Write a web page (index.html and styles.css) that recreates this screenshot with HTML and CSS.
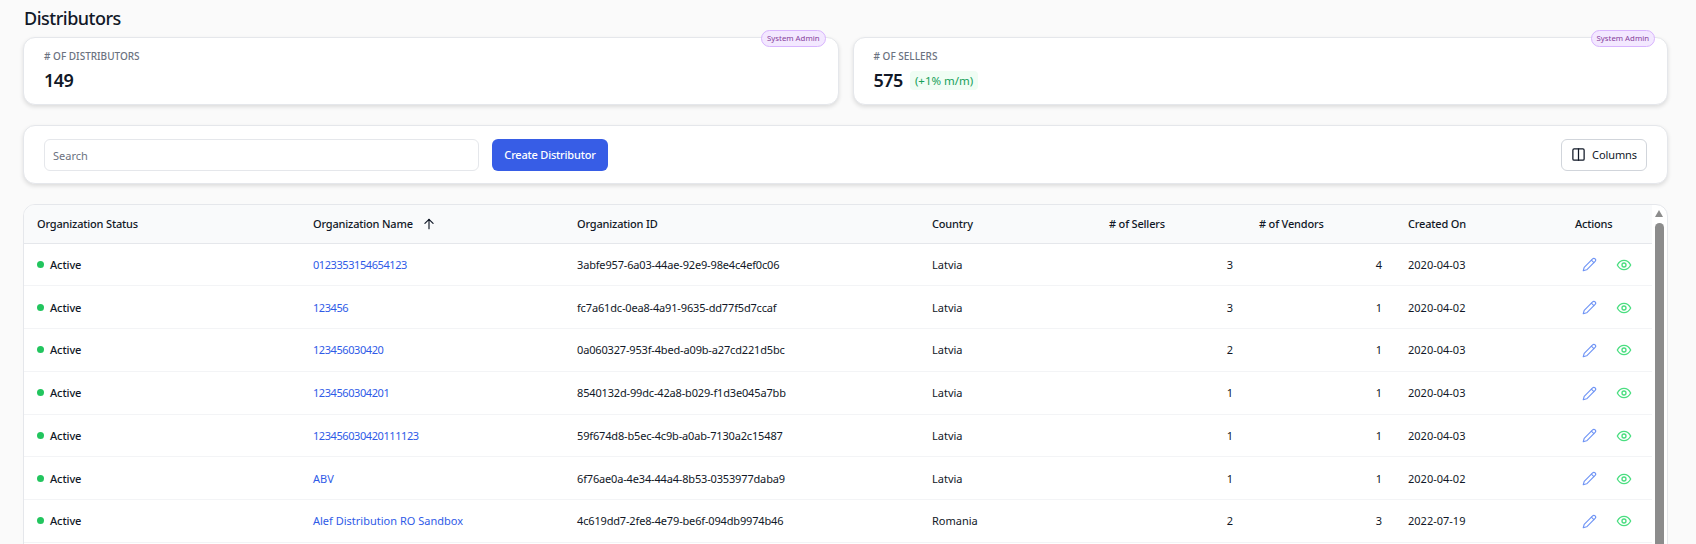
FILE: index.html
```html
<!DOCTYPE html>
<html lang="en">
<head>
    <meta charset="UTF-8">
    <title>Distributors</title>
    <link rel="stylesheet" href="styles.css">
</head>
<body>

<div class="page">
    <h1>Distributors</h1>

    <div class="stats">
        <div class="card stat">
            <span class="role-badge">System Admin</span>
            <div class="stat-label"># OF DISTRIBUTORS</div>
            <div class="stat-value">149</div>
        </div>
        <div class="card stat">
            <span class="role-badge">System Admin</span>
            <div class="stat-label"># OF SELLERS</div>
            <div class="stat-value">575 <span class="trend">(+1% m/m)</span></div>
        </div>
    </div>

    <div class="card toolbar">
        <input type="text" class="search" placeholder="Search">
        <button type="button" class="create">Create Distributor</button>
        <button type="button" class="columns">
            <svg width="15" height="15" viewBox="0 0 24 24" fill="none" stroke="currentColor" stroke-width="2" stroke-linecap="round" stroke-linejoin="round"><rect x="3" y="3" width="18" height="18" rx="2"/><path d="M12 3v18"/></svg>
            Columns
        </button>
    </div>

    <div class="table-card">
        <div class="table-scroll">
            <table>
                <colgroup>
                    <col class="col-status">
                    <col class="col-name">
                    <col class="col-id">
                    <col class="col-country">
                    <col class="col-sellers">
                    <col class="col-vendors">
                    <col class="col-created">
                    <col class="col-actions">
                </colgroup>
                <thead>
                    <tr>
                        <th>Organization Status</th>
                        <th>Organization Name
                            <svg class="sort" width="14" height="14" viewBox="0 0 24 24" fill="none" stroke="currentColor" stroke-width="2" stroke-linecap="round" stroke-linejoin="round"><path d="M12 20V4"/><path d="M5 11l7-7 7 7"/></svg>
                        </th>
                        <th>Organization ID</th>
                        <th>Country</th>
                        <th># of Sellers</th>
                        <th># of Vendors</th>
                        <th>Created On</th>
                        <th>Actions</th>
                    </tr>
                </thead>
                <tbody id="rows"></tbody>
            </table>
        </div>
        <div class="scrollbar">
            <div class="scroll-arrow"></div>
            <div class="scroll-thumb"></div>
        </div>
    </div>
</div>

<script>
    const distributors = [
        ['0123353154654123', '3abfe957-6a03-44ae-92e9-98e4c4ef0c06', 'Latvia', 3, 4, '2020-04-03'],
        ['123456', 'fc7a61dc-0ea8-4a91-9635-dd77f5d7ccaf', 'Latvia', 3, 1, '2020-04-02'],
        ['123456030420', '0a060327-953f-4bed-a09b-a27cd221d5bc', 'Latvia', 2, 1, '2020-04-03'],
        ['1234560304201', '8540132d-99dc-42a8-b029-f1d3e045a7bb', 'Latvia', 1, 1, '2020-04-03'],
        ['123456030420111123', '59f674d8-b5ec-4c9b-a0ab-7130a2c15487', 'Latvia', 1, 1, '2020-04-03'],
        ['ABV', '6f76ae0a-4e34-44a4-8b53-0353977daba9', 'Latvia', 1, 1, '2020-04-02'],
        ['Alef Distribution RO Sandbox', '4c619dd7-2fe8-4e79-be6f-094db9974b46', 'Romania', 2, 3, '2022-07-19']
    ];

    const pencil = '<svg class="edit" width="15" height="15" viewBox="0 0 24 24" fill="none" stroke="currentColor" stroke-width="1.8" stroke-linecap="round" stroke-linejoin="round"><path d="M17 3a2.8 2.8 0 0 1 4 4L7.5 20.5 2 22l1.5-5.5z"/><path d="M15 5l4 4"/></svg>';
    const eye = '<svg class="view" width="16" height="16" viewBox="0 0 24 24" fill="none" stroke="currentColor" stroke-width="2" stroke-linecap="round" stroke-linejoin="round"><path d="M2 12s3.6-7 10-7 10 7 10 7-3.6 7-10 7-10-7-10-7z"/><circle cx="12" cy="12" r="3"/></svg>';

    document.getElementById('rows').innerHTML = distributors.map(d => `
        <tr>
            <td><span class="status"><i class="dot"></i>Active</span></td>
            <td><a href="#" class="${/^\d+$/.test(d[0]) ? 'digits' : ''}">${d[0]}</a></td>
            <td class="uuid">${d[1]}</td>
            <td>${d[2]}</td>
            <td class="num">${d[3]}</td>
            <td class="num">${d[4]}</td>
            <td>${d[5]}</td>
            <td class="actions">${pencil}${eye}</td>
        </tr>
    `).join('');
</script>

</body>
</html>
```

FILE: styles.css
```css
* {
    box-sizing: border-box;
}
html, body {
    height: 544px;
    overflow: hidden;
}
body {
    font-family: 'Noto Sans', 'Open Sans', sans-serif;
    margin: 0;
    background-color: #fafafa;
    color: #111827;
}
.page {
    padding: 5px 28px 0 23px;
}
h1 {
    font-size: 18px;
    line-height: 26px;
    font-weight: 500;
    letter-spacing: -0.5px;
    margin: 0 0 6px 1px;
}
.card {
    background: white;
    border: 1px solid #e5e7eb;
    border-radius: 12px;
    box-shadow: 0 2px 4px rgba(0, 0, 0, 0.12);
}
.stats {
    display: flex;
    gap: 14px;
    margin-bottom: 20px;
}
.stat {
    position: relative;
    flex: 1;
    height: 68px;
    padding: 10px 20px;
}
.role-badge {
    position: absolute;
    top: -8px;
    right: 12px;
    height: 17px;
    padding: 0 5px;
    font-size: 7.8px;
    line-height: 15px;
    color: #86409c;
    background: #f3e8ff;
    border: 1px solid #d8b4fe;
    border-radius: 9px;
}
.stat-label {
    font-size: 10px;
    line-height: 16px;
    font-weight: 500;
    color: #6b7280;
}
.stat-value {
    display: flex;
    align-items: center;
    gap: 7px;
    margin-top: 4px;
    font-size: 18px;
    line-height: 24px;
    font-weight: 600;
    letter-spacing: -0.5px;
}
.trend {
    padding: 1px 5px;
    font-size: 11.5px;
    line-height: 17px;
    font-weight: 400;
    letter-spacing: 0;
    color: #16a05a;
    background: #f0fdf4;
    border-radius: 4px;
}
.toolbar {
    display: flex;
    align-items: center;
    height: 59px;
    padding: 0 20px;
    gap: 13px;
    margin-bottom: 20px;
}
.search {
    width: 435px;
    height: 32px;
    padding: 1px 8px 0;
    font-family: inherit;
    font-size: 11px;
    color: #111827;
    background: white;
    border: 1px solid #e5e7eb;
    border-radius: 6px;
}
.search::placeholder {
    color: #6b7280;
}
button {
    font-family: inherit;
    cursor: pointer;
}
.create {
    width: 116px;
    height: 32px;
    padding: 0;
    font-size: 11px;
    font-weight: 500;
    letter-spacing: -0.2px;
    color: white;
    background-color: #375de6;
    border: none;
    border-radius: 6px;
}
.columns {
    display: flex;
    align-items: center;
    gap: 6px;
    height: 32px;
    margin-left: auto;
    padding: 0 9px;
    font-size: 11px;
    letter-spacing: -0.1px;
    color: #111827;
    background: white;
    border: 1px solid #d1d5db;
    border-radius: 6px;
}
.table-card {
    display: flex;
    height: 400px;
    background: white;
    border: 1px solid #e5e7eb;
    border-radius: 12px;
    overflow: hidden;
}
.table-scroll {
    width: 1628px;
}
table {
    width: 100%;
    table-layout: fixed;
    border-collapse: collapse;
    font-size: 11px;
}
.col-status { width: 276px; }
.col-name { width: 264px; }
.col-id { width: 355px; }
.col-country { width: 177px; }
.col-sellers { width: 150px; }
.col-vendors { width: 149px; }
.col-created { width: 167px; }
.col-actions { width: 90px; }
thead tr {
    height: 38px;
    background-color: #f9fafb;
    border-bottom: 1px solid #e5e7eb;
}
th {
    padding: 0 13px;
    text-align: left;
    font-weight: 500;
    letter-spacing: -0.18px;
}
.sort {
    margin-left: 6px;
    vertical-align: -3px;
}
tbody tr {
    height: 42.75px;
    border-bottom: 1px solid #f3f4f6;
}
td {
    padding: 0 13px;
    white-space: nowrap;
}
td a {
    color: #2f5be7;
    text-decoration: none;
}
.digits {
    letter-spacing: -0.42px;
}
.uuid {
    letter-spacing: -0.16px;
}
.num {
    text-align: right;
}
.status {
    display: flex;
    align-items: center;
    gap: 6px;
    font-weight: 500;
    letter-spacing: -0.1px;
}
.dot {
    width: 7px;
    height: 7px;
    border-radius: 50%;
    background-color: #22c55e;
}
.actions svg {
    display: inline-block;
    vertical-align: middle;
}
.edit {
    margin-left: 7px;
    color: #6f94f5;
}
.view {
    margin-left: 19px;
    color: #4ade80;
}
.scrollbar {
    width: 16px;
    padding-left: 3px;
    padding-top: 5px;
}
.scroll-arrow {
    width: 0;
    height: 0;
    margin: 0 0 6px 0;
    border-left: 4.5px solid transparent;
    border-right: 4.5px solid transparent;
    border-bottom: 7px solid #8c8c8c;
}
.scroll-thumb {
    width: 9px;
    height: 400px;
    background-color: #8c8c8c;
    border-radius: 4.5px 4.5px 0 0;
}
```
